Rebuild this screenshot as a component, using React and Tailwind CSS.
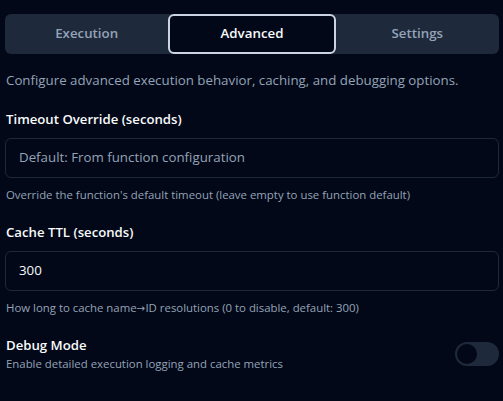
import React from "react";

export default function App() {
  const tabs = ["Execution", "Advanced", "Settings"];
  const active = "Advanced";
  return (
    <div
      className="w-[503px] h-[401px] bg-[#020817] pt-[14px] pl-[5px] pr-[4px] overflow-hidden"
      style={{ fontFamily: '"Open Sans", "Noto Sans", sans-serif' }}
    >
      <div className="flex h-[40px] rounded-md bg-[#1e293b]">
        {tabs.map((t) => (
          <div
            key={t}
            className={
              t === active
                ? "flex-1 flex items-center justify-center rounded-md border-2 border-[#cbd5e1] bg-[#020817] text-[13.3px] font-semibold text-[#f8fafc]"
                : "flex-1 flex items-center justify-center text-[13.3px] font-semibold text-[#94a3b8]"
            }
          >
            {t}
          </div>
        ))}
      </div>

      <p className="mt-[16px] pl-[1px] text-[13.3px] leading-[20px] text-[#94a3b8]">
        Configure advanced execution behavior, caching, and debugging options.
      </p>

      <div className="mt-[19px]">
        <div className="pl-[1px] text-[13.2px] leading-[20px] font-semibold text-[#f8fafc]">
          Timeout Override (seconds)
        </div>
        <div className="mt-[9px] h-[40px] rounded-md border border-[#1e293b] flex items-center px-[13px] text-[13.3px] text-[#94a3b8]">
          Default: From function configuration
        </div>
        <div className="mt-[9px] pl-[1px] text-[11.4px] leading-[16px] text-[#94a3b8]">
          Override the function's default timeout (leave empty to use function default)
        </div>
      </div>

      <div className="mt-[19px]">
        <div className="pl-[1px] text-[13.2px] leading-[20px] font-semibold text-[#f8fafc]">
          Cache TTL (seconds)
        </div>
        <div className="mt-[9px] h-[40px] rounded-md border border-[#1e293b] flex items-center px-[13px] text-[13.3px] text-[#f8fafc]">
          300
        </div>
        <div className="mt-[9px] pl-[1px] text-[11.4px] leading-[16px] text-[#94a3b8]">
          How long to cache name
          <span className="text-[10.5px]" style={{ fontFamily: '"DejaVu Sans", sans-serif' }}>→</span>
          ID resolutions (0 to disable, default: 300)
        </div>
      </div>

      <div className="mt-[19px] flex items-center justify-between">
        <div>
          <div className="pl-[1px] text-[13.2px] leading-[20px] font-semibold text-[#f8fafc]">
            Debug Mode
          </div>
          <div className="mt-[1px] pl-[1px] text-[11.4px] leading-[16px] text-[#94a3b8]">
            Enable detailed execution logging and cache metrics
          </div>
        </div>
        <div className="w-[44px] h-[24px] rounded-full bg-[#1e293b] border-2 border-transparent flex items-center">
          <div className="w-[20px] h-[20px] rounded-full bg-[#020817]" />
        </div>
      </div>
    </div>
  );
}
